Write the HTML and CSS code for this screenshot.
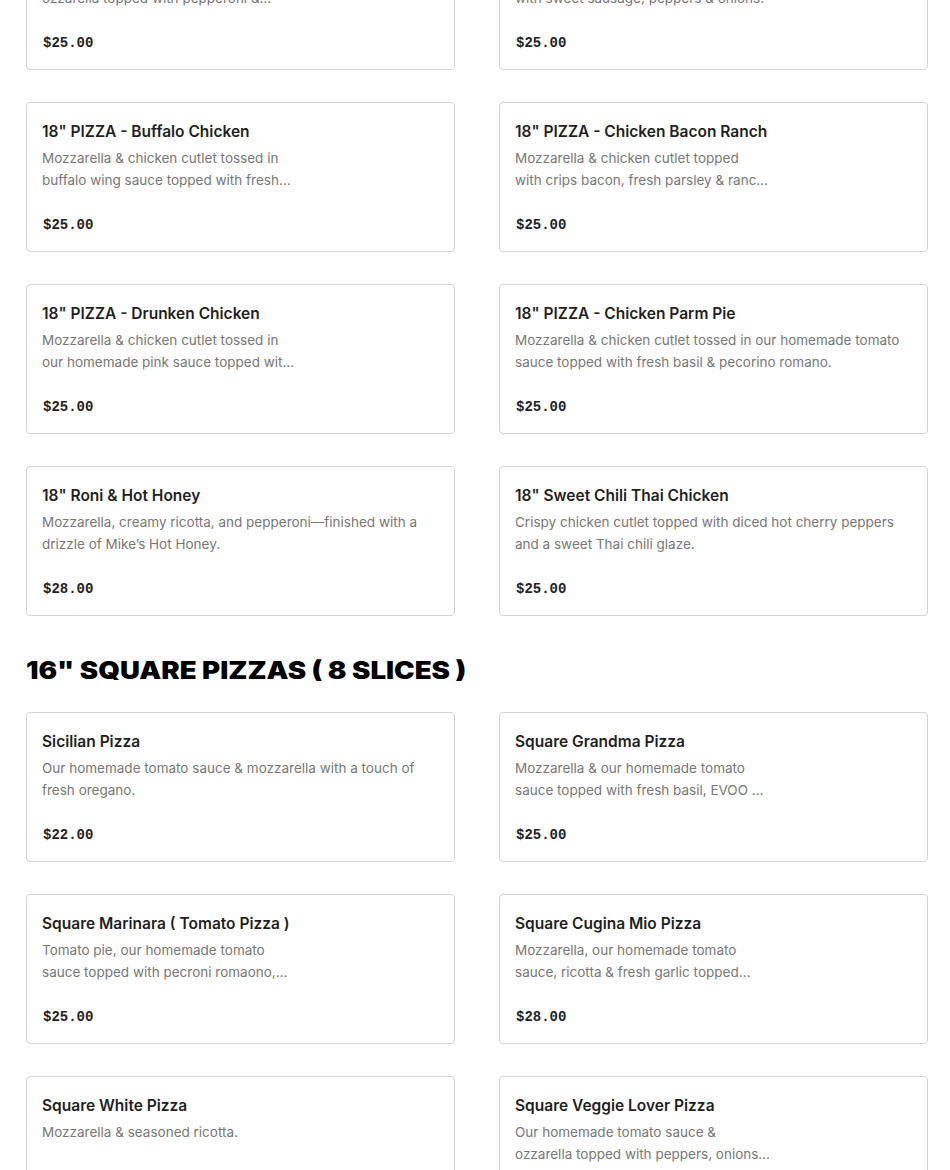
FILE: index.html
```html
<!DOCTYPE html>
<html lang="en">
<head>
<meta charset="utf-8">
<title>Menu</title>
<link rel="stylesheet" href="styles.css">
</head>
<body>
<main class="menu">
  <section class="section section-first">
    <div class="grid">
      <article class="card">
        <h3 class="title">18" PIZZA - Pepperoni Lover</h3>
        <p class="desc"><span class="line">Our homemade tomato sauce &amp;</span><span class="line">ozzarella topped with pepperoni &amp;…</span></p>
        <div class="price">$25.00</div>
      </article>
      <article class="card">
        <h3 class="title">18" PIZZA - Sausage, Peppers &amp; Onions</h3>
        <p class="desc"><span class="line">Our homemade tomato sauce &amp; mozzarella topped</span><span class="line">with sweet sausage, peppers &amp; onions.</span></p>
        <div class="price">$25.00</div>
      </article>
      <article class="card">
        <h3 class="title">18" PIZZA - Buffalo Chicken</h3>
        <p class="desc"><span class="line">Mozzarella &amp; chicken cutlet tossed in</span><span class="line">buffalo wing sauce topped with fresh…</span></p>
        <div class="price">$25.00</div>
      </article>
      <article class="card">
        <h3 class="title">18" PIZZA - Chicken Bacon Ranch</h3>
        <p class="desc"><span class="line">Mozzarella &amp; chicken cutlet topped</span><span class="line">with crips bacon, fresh parsley &amp; ranc…</span></p>
        <div class="price">$25.00</div>
      </article>
      <article class="card">
        <h3 class="title">18" PIZZA - Drunken Chicken</h3>
        <p class="desc"><span class="line">Mozzarella &amp; chicken cutlet tossed in</span><span class="line">our homemade pink sauce topped wit…</span></p>
        <div class="price">$25.00</div>
      </article>
      <article class="card">
        <h3 class="title">18" PIZZA - Chicken Parm Pie</h3>
        <p class="desc"><span class="line">Mozzarella &amp; chicken cutlet tossed in our homemade tomato</span><span class="line">sauce topped with fresh basil &amp; pecorino romano.</span></p>
        <div class="price">$25.00</div>
      </article>
      <article class="card">
        <h3 class="title">18" Roni &amp; Hot Honey</h3>
        <p class="desc"><span class="line">Mozzarella, creamy ricotta, and pepperoni—finished with a</span><span class="line">drizzle of Mike’s Hot Honey.</span></p>
        <div class="price">$28.00</div>
      </article>
      <article class="card">
        <h3 class="title">18" Sweet Chili Thai Chicken</h3>
        <p class="desc"><span class="line">Crispy chicken cutlet topped with diced hot cherry peppers</span><span class="line">and a sweet Thai chili glaze.</span></p>
        <div class="price">$25.00</div>
      </article>
    </div>
  </section>

  <section class="section">
    <h2 class="section-title"><span class="section-title-text">16" SQUARE PIZZAS ( 8 SLICES )</span></h2>
    <div class="grid">
      <article class="card">
        <h3 class="title">Sicilian Pizza</h3>
        <p class="desc"><span class="line">Our homemade tomato sauce &amp; mozzarella with a touch of</span><span class="line">fresh oregano.</span></p>
        <div class="price">$22.00</div>
      </article>
      <article class="card">
        <h3 class="title">Square Grandma Pizza</h3>
        <p class="desc"><span class="line">Mozzarella &amp; our homemade tomato</span><span class="line">sauce topped with fresh basil, EVOO …</span></p>
        <div class="price">$25.00</div>
      </article>
      <article class="card">
        <h3 class="title">Square Marinara ( Tomato Pizza )</h3>
        <p class="desc"><span class="line">Tomato pie, our homemade tomato</span><span class="line">sauce topped with pecroni romaono,…</span></p>
        <div class="price">$25.00</div>
      </article>
      <article class="card">
        <h3 class="title">Square Cugina Mio Pizza</h3>
        <p class="desc"><span class="line">Mozzarella, our homemade tomato</span><span class="line">sauce, ricotta &amp; fresh garlic topped…</span></p>
        <div class="price">$28.00</div>
      </article>
      <article class="card">
        <h3 class="title">Square White Pizza</h3>
        <p class="desc"><span class="line">Mozzarella &amp; seasoned ricotta.</span></p>
        <div class="price">$22.00</div>
      </article>
      <article class="card">
        <h3 class="title">Square Veggie Lover Pizza</h3>
        <p class="desc"><span class="line">Our homemade tomato sauce &amp;</span><span class="line">ozzarella topped with peppers, onions…</span></p>
        <div class="price">$25.00</div>
      </article>
    </div>
  </section>
</main>
</body>
</html>
```

FILE: styles.css
```css
* {
  box-sizing: border-box;
}

html, body {
  margin: 0;
  padding: 0;
  background: #ffffff;
}

body {
  font-family: Inter, "Liberation Sans", Arial, sans-serif;
  color: #1f1f1f;
  overflow: hidden;
}

.menu {
  padding: 0 22px 40px 26px;
}

.section-first {
  margin-top: -80px;
}

.grid {
  display: grid;
  grid-template-columns: 429px 429px;
  column-gap: 44px;
  row-gap: 32px;
}

.card {
  border: 1px solid #d4d4d4;
  border-radius: 4px;
  padding: 17px 16px 15px 15px;
  height: 150px;
  background: #fff;
}

.title {
  margin: 0;
  font-size: 15.5px;
  line-height: 24px;
  font-weight: 600;
  color: #1f1f1f;
}

.desc {
  margin: 3px 0 0;
  height: 44px;
  font-size: 13.5px;
  line-height: 22px;
  color: #777777;
  font-weight: 400;
}

.line {
  display: block;
  white-space: nowrap;
}

.price {
  margin-top: 24px;
  padding-left: 1px;
  font-family: "Liberation Mono", "DejaVu Sans Mono", monospace;
  font-size: 14px;
  line-height: 20px;
  font-weight: 700;
  color: #222;
}

.section-title {
  margin: 39px 0 25px;
  font-family: Inter, "Liberation Sans", Arial, sans-serif;
  font-size: 24px;
  line-height: 32px;
  font-weight: 900;
  color: #000;
}

.section-title-text {
  display: inline-block;
  transform: scaleX(1.15);
  transform-origin: left center;
}
```
